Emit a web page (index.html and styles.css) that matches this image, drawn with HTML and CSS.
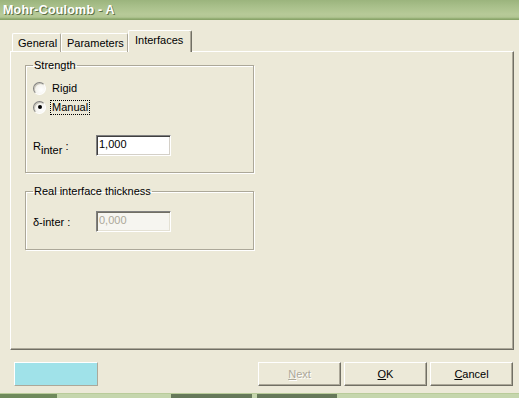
FILE: index.html
```html
<!DOCTYPE html>
<html>
<head>
  <meta charset="UTF-8">
  <title>Mohr-Coulomb - A</title>
  <link rel="stylesheet" href="styles.css">
</head>
<body>
  <div id="window">
    <div id="titlebar">
      <span id="title">Mohr-Coulomb - A</span>
    </div>

    <div id="dialog">
      <div class="tabs">
        <div class="tab tab-general">General</div>
        <div class="tab tab-params">Parameters</div>
        <div class="tab tab-interfaces active">Interfaces</div>
      </div>

      <div class="panel">
        <fieldset class="group group-strength">
          <legend>Strength</legend>
          <div class="radio-row">
            <span class="radio"></span>
            <span class="radio-label">Rigid</span>
          </div>
          <div class="radio-row row-manual">
            <span class="radio checked"><span class="dot"></span></span>
            <span class="radio-label focused">Manual</span>
          </div>
          <div class="field-row row-rinter">
            <span class="field-label">R<sub>inter</sub> :</span>
            <div class="input">1,000</div>
          </div>
        </fieldset>

        <fieldset class="group group-thickness">
          <legend>Real interface thickness</legend>
          <div class="field-row">
            <span class="field-label">&delta;-inter :</span>
            <div class="input disabled">0,000</div>
          </div>
        </fieldset>
      </div>

      <div class="footer">
        <div class="color-box"></div>
        <div class="buttons">
          <button class="btn" disabled><u>N</u>ext</button>
          <button class="btn"><u>O</u>K</button>
          <button class="btn"><u>C</u>ancel</button>
        </div>
      </div>
    </div>

    <div id="taskbar">
      <div class="task t1"></div>
      <div class="task t2"></div>
      <div class="task t3"></div>
      <div class="task t4"></div>
      <div class="task t5"></div>
      <div class="task t6"></div>
    </div>
  </div>
</body>
</html>
```

FILE: styles.css
```css
body, html {
  margin: 0;
  padding: 0;
  height: 100%;
  overflow: hidden;
}

body {
  background-color: #ece9d8;
  font-family: "Liberation Sans", Arial, sans-serif;
  font-size: 11px;
  color: #000;
}

#window {
  width: 519px;
  height: 398px;
  display: flex;
  flex-direction: column;
}

/* title bar */
#titlebar {
  height: 20px;
  flex-shrink: 0;
  box-sizing: border-box;
  padding-left: 3px;
  display: flex;
  align-items: center;
  background: linear-gradient(to bottom, #9bb47d 0%, #a9c08b 35%, #b7ca98 75%, #b2c693 90%, #8da86c 100%);
  border-bottom: 1px solid #8aa46a;
}

#title {
  font-size: 12.5px;
  font-weight: bold;
  color: #fff;
  text-shadow: 1px 1px 0 #5d7046;
  letter-spacing: 0.2px;
}

#dialog {
  flex-grow: 1;
  padding: 11px 5px 0 10px;
}

/* tabs */
.tabs {
  display: flex;
  align-items: flex-end;
  height: 21px;
  padding-left: 2px;
  margin-bottom: -1px;
}

.tab {
  box-sizing: border-box;
  height: 19px;
  line-height: 18px;
  padding-left: 5px;
  border-top: 1px solid #fff;
  border-left: 1px solid #fff;
  border-right: 1px solid #aca899;
  border-radius: 2px 2px 0 0;
  white-space: nowrap;
}

.tab-general { width: 49px; }
.tab-params { width: 67px; }

.tab.active {
  position: relative;
  z-index: 1;
  width: 64px;
  height: 22px;
  line-height: 18px;
  padding-left: 6px;
  background-color: #ece9d8;
  border-right: 1px solid #716f64;
  box-shadow: inset -1px 0 0 #aca899;
}

/* panel */
.panel {
  box-sizing: border-box;
  height: 299px;
  padding: 7px 0 0 14px;
  border-top: 1px solid #fff;
  border-left: 1px solid #fff;
  border-right: 1px solid #716f64;
  border-bottom: 1px solid #716f64;
  box-shadow: inset -1px -1px 0 #aca899;
}

.group {
  box-sizing: border-box;
  width: 229px;
  margin: 0;
  padding: 0 8px 0 7px;
  border: 1px solid #aca899;
  box-shadow: 1px 1px 0 #fff, inset 1px 1px 0 #fff;
}

.group legend {
  padding: 0 1px;
  line-height: 13px;
}

.group-strength {
  padding-top: 9px;
  padding-bottom: 16px;
}

.group-thickness {
  margin-top: 12px;
  padding-top: 13px;
  padding-bottom: 17px;
}

/* radios */
.radio-row {
  display: flex;
  align-items: center;
  height: 14px;
}

.row-manual {
  margin-top: 5px;
}

.radio {
  box-sizing: border-box;
  width: 13px;
  height: 13px;
  margin-right: 4px;
  border-radius: 50%;
  border: 1px solid;
  border-color: #808080 #fff #fff #808080;
  background: radial-gradient(circle at 65% 65%, #ffffff 0%, #f4f3ee 55%, #d8d5c8 100%);
  box-shadow: inset 1px 1px 0 #c8c5b8;
  display: flex;
  align-items: center;
  justify-content: center;
}

.radio .dot {
  width: 4px;
  height: 4px;
  border-radius: 50%;
  background-color: #000;
}

.radio-label {
  padding: 0 1px;
  line-height: 13px;
  border: 1px solid transparent;
}

.radio-label.focused {
  border: 1px dotted #000;
}

/* fields */
.field-row {
  display: flex;
  align-items: center;
  height: 21px;
}

.row-rinter {
  margin-top: 21px;
}

.field-label {
  width: 63px;
  flex-shrink: 0;
}

.field-label sub {
  font-size: 11px;
  vertical-align: -4px;
  line-height: 0;
}

.input {
  box-sizing: border-box;
  width: 75px;
  height: 21px;
  line-height: 17px;
  padding-left: 2px;
  background-color: #fff;
  border-top: 1px solid #808080;
  border-left: 1px solid #808080;
  border-right: 1px solid #fff;
  border-bottom: 1px solid #fff;
  box-shadow: inset 1px 1px 0 #404040, inset -1px -1px 0 #d4d0c8;
}

.input.disabled {
  background-color: #f6f5f0;
  color: #aca899;
  box-shadow: inset 1px 1px 0 #716f64, inset -1px -1px 0 #e4e1d4;
}

/* footer */
.footer {
  display: flex;
  align-items: flex-start;
  justify-content: space-between;
  margin-top: 12px;
  padding-left: 4px;
}

.color-box {
  box-sizing: border-box;
  width: 84px;
  height: 24px;
  background-color: #a0e2e9;
  border-top: 1px solid #fff;
  border-left: 1px solid #fff;
  border-right: 1px solid #aca899;
  border-bottom: 1px solid #aca899;
}

.buttons {
  display: flex;
  gap: 3px;
  margin-right: 1px;
}

.btn {
  box-sizing: border-box;
  width: 83px;
  height: 24px;
  padding: 0;
  margin: 0;
  font-family: "Liberation Sans", Arial, sans-serif;
  font-size: 11px;
  color: #000;
  background-color: #ece9d8;
  border-top: 1px solid #fff;
  border-left: 1px solid #fff;
  border-right: 1px solid #716f64;
  border-bottom: 1px solid #716f64;
  box-shadow: inset -1px -1px 0 #aca899;
  border-radius: 0;
}

.btn:disabled {
  color: #aca899;
  text-shadow: 1px 1px 0 #fff;
}

/* taskbar strip */
#taskbar {
  height: 5px;
  flex-shrink: 0;
  display: flex;
  border-top: 1px solid #b9cc9a;
  background-color: #94a97a;
  box-sizing: border-box;
}

.task {
  height: 100%;
}

.t1 { width: 57px; background-color: #6f8a5c; }
.t2 { width: 114px; background-color: #c5d6ad; }
.t3 { width: 81px; background-color: #66795a; }
.t4 { width: 5px; background-color: #c5d6ad; }
.t5 { width: 80px; background-color: #66795a; }
.t6 { flex-grow: 1; background-color: #c5d6ad; }
```
